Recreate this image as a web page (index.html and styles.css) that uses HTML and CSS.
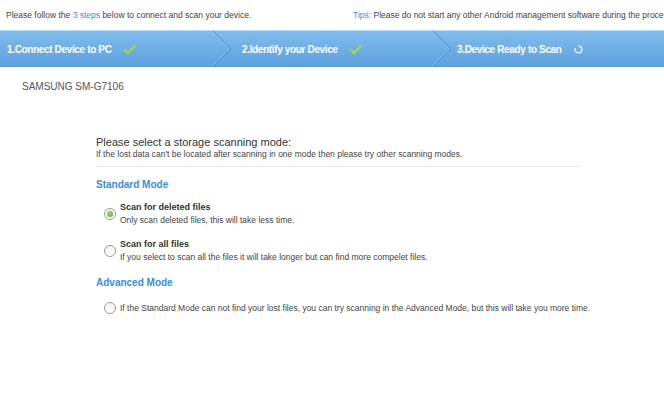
FILE: index.html
```
<!DOCTYPE html>
<html lang="en">
<head>
    <meta charset="UTF-8">
    <meta name="viewport" content="width=device-width, initial-scale=1.0">
    <link rel="stylesheet" href="styles.css">
    <title>Scan Device</title>
</head>
<body>
    <div class="topbar">
        <span class="follow">Please follow the <span class="blue">3 steps</span> below to connect and scan your device.</span>
        <span class="tips"><span class="blue">Tips:</span> Please do not start any other Android management software during the process.</span>
    </div>

    <div class="steps">
        <div class="step step-1">1.Connect Device to PC
            <svg class="check" width="14" height="11" viewBox="0 0 14 11"><path d="M1.5 5.5 L5 9 L12.5 1.5" fill="none" stroke="#a4dc2c" stroke-width="2.4"/></svg>
        </div>
        <svg class="sep" width="22" height="36" viewBox="0 0 22 36"><path d="M1 0 L19 18 L1 36" fill="none" stroke="#4f8fcf" stroke-width="1"/><path d="M0 1 L17 18 L0 35" fill="none" stroke="#8cc4ef" stroke-width="1" opacity=".6"/></svg>
        <div class="step step-2">2.Identify your Device
            <svg class="check" width="14" height="11" viewBox="0 0 14 11"><path d="M1.5 5.5 L5 9 L12.5 1.5" fill="none" stroke="#a4dc2c" stroke-width="2.4"/></svg>
        </div>
        <svg class="sep" width="22" height="36" viewBox="0 0 22 36"><path d="M1 0 L19 18 L1 36" fill="none" stroke="#4f8fcf" stroke-width="1"/><path d="M0 1 L17 18 L0 35" fill="none" stroke="#8cc4ef" stroke-width="1" opacity=".6"/></svg>
        <div class="step step-3">3.Device Ready to Scan
            <svg class="spin" width="9" height="9" viewBox="0 0 9 9"><path d="M4.5 1 A3.5 3.5 0 1 1 1.2 3.3" fill="none" stroke="#e8f3fc" stroke-width="1.4"/></svg>
        </div>
    </div>

    <div class="device">SAMSUNG SM-G7106</div>

    <div class="panel">
        <div class="title">Please select a storage scanning mode:</div>
        <div class="sub">If the lost data can't be located after scanning in one mode then please try other scanning modes.</div>
        <div class="divider"></div>

        <div class="mode">Standard Mode</div>
        <label class="option">
            <span class="radio checked"></span>
            <span class="opt-text">
                <b>Scan for deleted files</b>
                <span>Only scan deleted files, this will take less time.</span>
            </span>
        </label>
        <label class="option">
            <span class="radio"></span>
            <span class="opt-text">
                <b>Scan for all files</b>
                <span>If you select to scan all the files it will take longer but can find more compelet files.</span>
            </span>
        </label>

        <div class="mode mode-adv">Advanced Mode</div>
        <label class="option single">
            <span class="radio"></span>
            <span class="opt-text">
                <span>If the Standard Mode can not find your lost files, you can try scanning in the Advanced Mode, but this will take you more time.</span>
            </span>
        </label>
    </div>
</body>
</html>
```

FILE: styles.css
```
body {
    margin: 0;
    width: 664px;
    height: 395px;
    overflow: hidden;
    background: #fff;
    font-family: "Liberation Sans", Arial, sans-serif;
    color: #444;
}
.blue {
    color: #3d8fdf;
}
.topbar {
    display: flex;
    height: 30px;
    align-items: center;
    padding-left: 6px;
    font-size: 8.5px;
    white-space: nowrap;
    overflow: hidden;
    color: #444;
}
.follow {
    flex: none;
    width: 347px;
}
.steps {
    display: flex;
    height: 36px;
    border-top: 1px solid #b9daf5;
    background: linear-gradient(#81bdec, #5d9fdd);
    color: #fff;
    font-weight: bold;
    font-size: 10px;
    letter-spacing: -0.35px;
    white-space: nowrap;
}
.step {
    display: flex;
    align-items: center;
    height: 36px;
}
.step-1 {
    width: 205px;
    padding-left: 7px;
}
.step-2 {
    width: 190px;
    padding-left: 8px;
}
.step-3 {
    padding-left: 3px;
}
.check {
    margin-left: 11px;
}
.spin {
    margin-left: 12px;
}
.sep {
    flex: none;
}
.device {
    padding: 14px 0 0 22px;
    font-size: 10px;
    color: #555;
}
.panel {
    width: 484px;
    margin: 44px 0 0 96px;
}
.title {
    font-size: 11px;
    color: #333;
}
.sub {
    margin-top: 1px;
    font-size: 8.5px;
    color: #444;
}
.divider {
    height: 1px;
    background: #e3e9f0;
    margin-top: 7px;
}
.mode {
    margin-top: 12px;
    font-size: 10px;
    font-weight: bold;
    color: #3a8ddf;
}
.mode-adv {
    margin-top: 15px;
}
.option {
    display: flex;
    align-items: center;
    margin: 12px 0 0 8px;
    font-size: 8.5px;
    white-space: nowrap;
}
.option + .option {
    margin-top: 14px;
}
.radio {
    flex: none;
    width: 10px;
    height: 10px;
    border: 1px solid #9a9a9a;
    border-radius: 50%;
    background: linear-gradient(#f4f4f4, #fff);
    margin-right: 4px;
    display: flex;
    align-items: center;
    justify-content: center;
}
.radio.checked::after {
    content: "";
    width: 6px;
    height: 6px;
    border-radius: 50%;
    background: radial-gradient(circle at 40% 35%, #9ee05a, #4ca81c);
}
.opt-text {
    display: flex;
    flex-direction: column;
    gap: 3px;
}
.opt-text b {
    font-size: 9px;
    color: #333;
}
.single {
    margin-top: 14px;
}
```
